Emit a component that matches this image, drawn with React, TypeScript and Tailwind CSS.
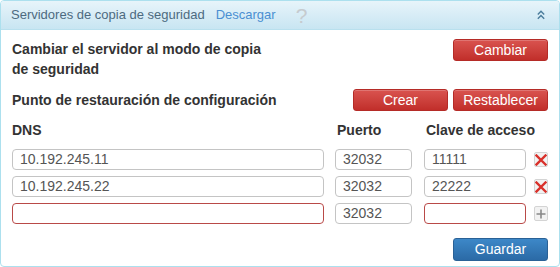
import { useState } from "react";

type Row = { dns: string; port: string; key: string };

const redBtn =
  "h-[22px] w-[95px] rounded-[3px] border border-[#b52b27] bg-gradient-to-b from-[#d9534f] to-[#c12e2a] text-[14px] text-white shadow-[inset_0_1px_0_rgba(255,255,255,0.2)]";

const input =
  "h-[21px] rounded-[4px] border bg-white px-[7px] text-[14px] text-[#555] outline-none";

function XIcon() {
  return (
    <svg width="12" height="12" viewBox="0 0 12 12">
      <path d="M1.5 1.5 L10.5 10.5 M10.5 1.5 L1.5 10.5" stroke="#d9312b" strokeWidth="2.4" strokeLinecap="square" />
    </svg>
  );
}

function PlusIcon() {
  return (
    <svg width="12" height="12" viewBox="0 0 12 12">
      <path d="M6 1.5 V10.5 M1.5 6 H10.5" stroke="#888" strokeWidth="1.6" />
    </svg>
  );
}

export default function App() {
  const [rows] = useState<Row[]>([
    { dns: "10.192.245.11", port: "32032", key: "11111" },
    { dns: "10.192.245.22", port: "32032", key: "22222" },
  ]);

  return (
    <div className="h-[267px] w-[560px] bg-white font-['Liberation_Sans',Arial,sans-serif]">
      <div className="h-[267px] w-[560px] overflow-hidden rounded-[4px] border border-[#ace0ee]">
        <div className="flex h-[29px] items-center border-b border-[#b9e0ee] bg-gradient-to-b from-[#e7f4fa] to-[#c8e5f2] pl-[10px] pr-[14px]">
          <span className="text-[13px] text-[#4d6a80]">Servidores de copia de seguridad</span>
          <span className="ml-[11px] text-[13px] text-[#4a8fd2]">Descargar</span>
          <span className="ml-[20px] text-[21px] leading-none text-[#c6cbcf]">?</span>
          <svg className="ml-auto" width="8" height="10" viewBox="0 0 8 10">
            <path d="M0.8 4.5 L4 1.3 L7.2 4.5 M0.8 8.7 L4 5.5 L7.2 8.7" fill="none" stroke="#4b7c9c" strokeWidth="1.4" />
          </svg>
        </div>

        <div className="px-[11px] pt-[9px] text-[14px] text-[#333]">
          <div className="flex items-start justify-between">
            <p className="w-[262px] font-bold leading-[20px]">
              Cambiar el servidor al modo de copia de seguridad
            </p>
            <button className={redBtn}>Cambiar</button>
          </div>

          <div className="mt-[10px] flex items-center justify-between">
            <p className="font-bold leading-[20px]">Punto de restauración de configuración</p>
            <div className="flex gap-[5px]">
              <button className={redBtn}>Crear</button>
              <button className={redBtn}>Restablecer</button>
            </div>
          </div>

          <div className="mt-[9px] flex whitespace-nowrap font-bold leading-[20px]">
            <span className="w-[325px]">DNS</span>
            <span className="w-[89px]">Puerto</span>
            <span>Clave de acceso</span>
          </div>

          <div className="mt-[9px] flex flex-col gap-[6px]">
            {rows.map((r) => (
              <div key={r.dns} className="flex items-center">
                <input readOnly value={r.dns} className={`${input} w-[314px] border-[#c4c4c4]`} />
                <input readOnly value={r.port} className={`${input} ml-[11px] w-[77px] border-[#c4c4c4]`} />
                <input readOnly value={r.key} className={`${input} ml-[12px] w-[102px] border-[#c4c4c4]`} />
                <span className="ml-[8px] flex h-[15px] w-[14px] items-center justify-center rounded-[2px] border border-[#d4d4d4] bg-[#f2f2f2]">
                  <XIcon />
                </span>
              </div>
            ))}
            <div className="flex items-center">
              <input readOnly value="" className={`${input} w-[314px] border-[#b94a48]`} />
              <input readOnly value="32032" className={`${input} ml-[11px] w-[77px] border-[#c4c4c4]`} />
              <input readOnly value="" className={`${input} ml-[12px] w-[102px] border-[#b94a48]`} />
              <span className="ml-[8px] flex h-[15px] w-[14px] items-center justify-center rounded-[2px] border border-[#d4d4d4] bg-[#f2f2f2]">
                <PlusIcon />
              </span>
            </div>
          </div>

          <div className="mt-[14px] flex justify-end">
            <button className="h-[23px] w-[95px] rounded-[3px] border border-[#2a6196] bg-gradient-to-b from-[#3d88c8] to-[#2b6aa6] text-[14px] text-white">
              Guardar
            </button>
          </div>
        </div>
      </div>
    </div>
  );
}
